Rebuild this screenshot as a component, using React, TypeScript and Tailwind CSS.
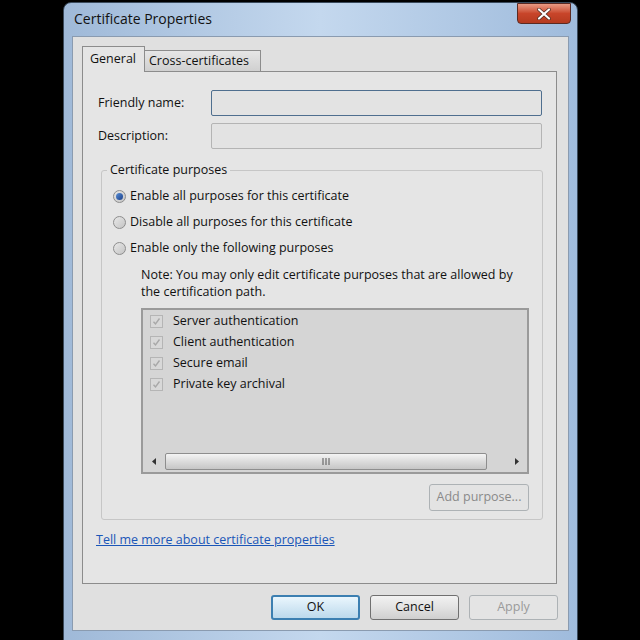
import React from "react";

const font = { fontFamily: '"Open Sans", "Noto Sans", sans-serif' };

function Radio({ checked, label }: { checked?: boolean; label: string }) {
  return (
    <div className="flex items-center h-[26px]">
      <span className="w-[13px] h-[13px] rounded-full border border-[#8d8d8d] bg-gradient-to-br from-[#e8e8e8] to-[#c4c4c4] flex items-center justify-center mr-[4px]">
        {checked && <span className="w-[7px] h-[7px] rounded-full bg-gradient-to-br from-[#5a8fd6] to-[#1b3f8a]" />}
      </span>
      <span className="text-[12.5px] text-[#111]">{label}</span>
    </div>
  );
}

function Check({ label }: { label: string }) {
  return (
    <div className="flex items-center h-[21px]">
      <span className="w-[13px] h-[13px] border border-[#b5b5b5] bg-[#d8d8d8] flex items-center justify-center mr-[10px]">
        <svg width="9" height="9" viewBox="0 0 9 9">
          <path d="M1.5 4.8 L3.5 7 L7.5 1.5" stroke="#a8a8a8" strokeWidth="1.4" fill="none" />
        </svg>
      </span>
      <span className="text-[12.5px] text-[#111]">{label}</span>
    </div>
  );
}

function DlgButton({ label, focused, disabled }: { label: string; focused?: boolean; disabled?: boolean }) {
  return (
    <button
      className={
        "w-[89px] h-[25px] rounded-[3px] text-[12.5px] " +
        (focused
          ? "border-2 border-[#3c7fb1] bg-gradient-to-b from-[#eaf6fd] to-[#bcd9ec] text-[#111]"
          : disabled
          ? "border border-[#adb2b5] bg-[#e4e4e4] text-[#9a9a9a]"
          : "border border-[#707070] bg-gradient-to-b from-[#f2f2f2] via-[#e2e2e2] to-[#cfcfcf] text-[#111]")
      }
    >
      {label}
    </button>
  );
}

export default function App() {
  return (
    <div className="w-[640px] h-[640px] bg-black pl-[63px] pt-[2px] overflow-hidden" style={font}>
      <div className="w-[515px] h-[640px] rounded-t-[8px] border border-[#3a4a5c] bg-gradient-to-r from-[#9fb9d8] via-[#c4d8ee] to-[#9fbbdc] flex flex-col px-[8px]">
        {/* Title bar */}
        <div className="h-[33px] flex items-start justify-between">
          <span className="text-[14px] text-[#111] pl-[2px] pt-[5px]">Certificate Properties</span>
          <div className="w-[54px] h-[21px] -mr-[2px] rounded-b-[4px] border border-[#5b2a22] bg-gradient-to-b from-[#e89a84] via-[#c8452a] to-[#b53a1f] flex items-center justify-center">
            <svg width="14" height="12" viewBox="0 0 14 12">
              <path d="M2 1.5 L12 10.5 M12 1.5 L2 10.5" stroke="#4a2a20" strokeWidth="3.6" strokeLinecap="round" />
              <path d="M2 1.5 L12 10.5 M12 1.5 L2 10.5" stroke="#ffffff" strokeWidth="2.2" strokeLinecap="round" />
            </svg>
          </div>
        </div>

        {/* Client area */}
        <div className="h-[595px] bg-[#e0e0e0] border border-[#8a9bb0] flex flex-col pl-[9px] pr-[11px] pt-[8px]">
          {/* Tabs */}
          <div className="flex items-end h-[26px]">
            <div className="h-[26px] w-[63px] border border-b-0 border-[#8c8c8c] bg-[#e5e5e5] text-[12.5px] text-[#111] pl-[7px] pt-[3px] relative z-10 -mb-px">
              General
            </div>
            <div className="h-[21px] w-[116px] border border-l-0 border-b-0 border-[#8c8c8c] bg-gradient-to-b from-[#e6e6e6] to-[#d0d0d0] text-[12.5px] text-[#111] pl-[4px] pt-[1px]">
              Cross-certificates
            </div>
          </div>

          {/* Tab page */}
          <div className="h-[513px] border border-[#8c8c8c] bg-[#e5e5e5] flex flex-col pl-[15px] pr-[14px] pt-[18px]">
            <div className="flex items-center h-[26px]">
              <span className="w-[113px] text-[12.5px] text-[#111]">Friendly name:</span>
              <div className="flex-1 h-[26px] border border-[#4f6f8f] bg-[#e3e3e3] rounded-[2px]" />
            </div>
            <div className="flex items-center h-[26px] mt-[7px]">
              <span className="w-[113px] text-[12.5px] text-[#111]">Description:</span>
              <div className="flex-1 h-[26px] border border-[#b4b4b4] bg-[#e3e3e3] rounded-[2px]" />
            </div>

            {/* Group box */}
            <div className="relative mt-[21px] ml-[3px] mr-[-1px] h-[350px] border border-[#c6c6c6] rounded-[3px] pl-[11px] pr-[13px] pt-[12px] flex flex-col">
              <span className="absolute -top-[10px] left-[5px] px-[3px] bg-[#e5e5e5] text-[12.5px] text-[#111]">Certificate purposes</span>
              <Radio checked label="Enable all purposes for this certificate" />
              <Radio label="Disable all purposes for this certificate" />
              <Radio label="Enable only the following purposes" />
              <div className="pl-[28px] pt-[5px] text-[12.5px] leading-[17px] text-[#111]">
                Note: You may only edit certificate purposes that are allowed by the certification path.
              </div>
              <div className="ml-[28px] mt-[8px] h-[166px] border-2 border-[#9a9a9a] bg-[#d5d5d5] flex flex-col">
                <div className="flex-1 pl-[7px] pt-[1px] flex flex-col">
                  <Check label="Server authentication" />
                  <Check label="Client authentication" />
                  <Check label="Secure email" />
                  <Check label="Private key archival" />
                </div>
                <div className="h-[18px] mb-[2px] flex items-center">
                  <div className="w-[22px] flex items-center justify-center">
                    <svg width="5" height="7" viewBox="0 0 5 7"><path d="M4 0 L0 3.5 L4 7 Z" fill="#333" /></svg>
                  </div>
                  <div className="flex-1 h-[17px] rounded-[2px] border border-[#8e8e8e] bg-gradient-to-b from-[#f4f4f4] via-[#dcdcdc] to-[#c6c6c6] flex items-center justify-center">
                    <svg width="8" height="7" viewBox="0 0 8 7">
                      <path d="M1 0 V7 M4 0 V7 M7 0 V7" stroke="#555" strokeWidth="1" />
                    </svg>
                  </div>
                  <div className="w-[40px] flex items-center justify-end pr-[8px]">
                    <svg width="5" height="7" viewBox="0 0 5 7"><path d="M1 0 L5 3.5 L1 7 Z" fill="#333" /></svg>
                  </div>
                </div>
              </div>
              <div className="flex justify-end mt-[10px]">
                <button className="w-[100px] h-[27px] rounded-[3px] border border-[#adb2b5] bg-[#e3e3e3] text-[12.5px] text-[#8a8a8a]">
                  Add purpose...
                </button>
              </div>
            </div>

            <a className="mt-[11px] -ml-[2px] self-start text-[12.5px] text-[#1a56b8] underline">
              Tell me more about certificate properties
            </a>
          </div>

          {/* Buttons */}
          <div className="flex justify-end gap-[10px] mt-[11px] -mr-[1px]">
            <DlgButton label="OK" focused />
            <DlgButton label="Cancel" />
            <DlgButton label="Apply" disabled />
          </div>
        </div>
      </div>
    </div>
  );
}
